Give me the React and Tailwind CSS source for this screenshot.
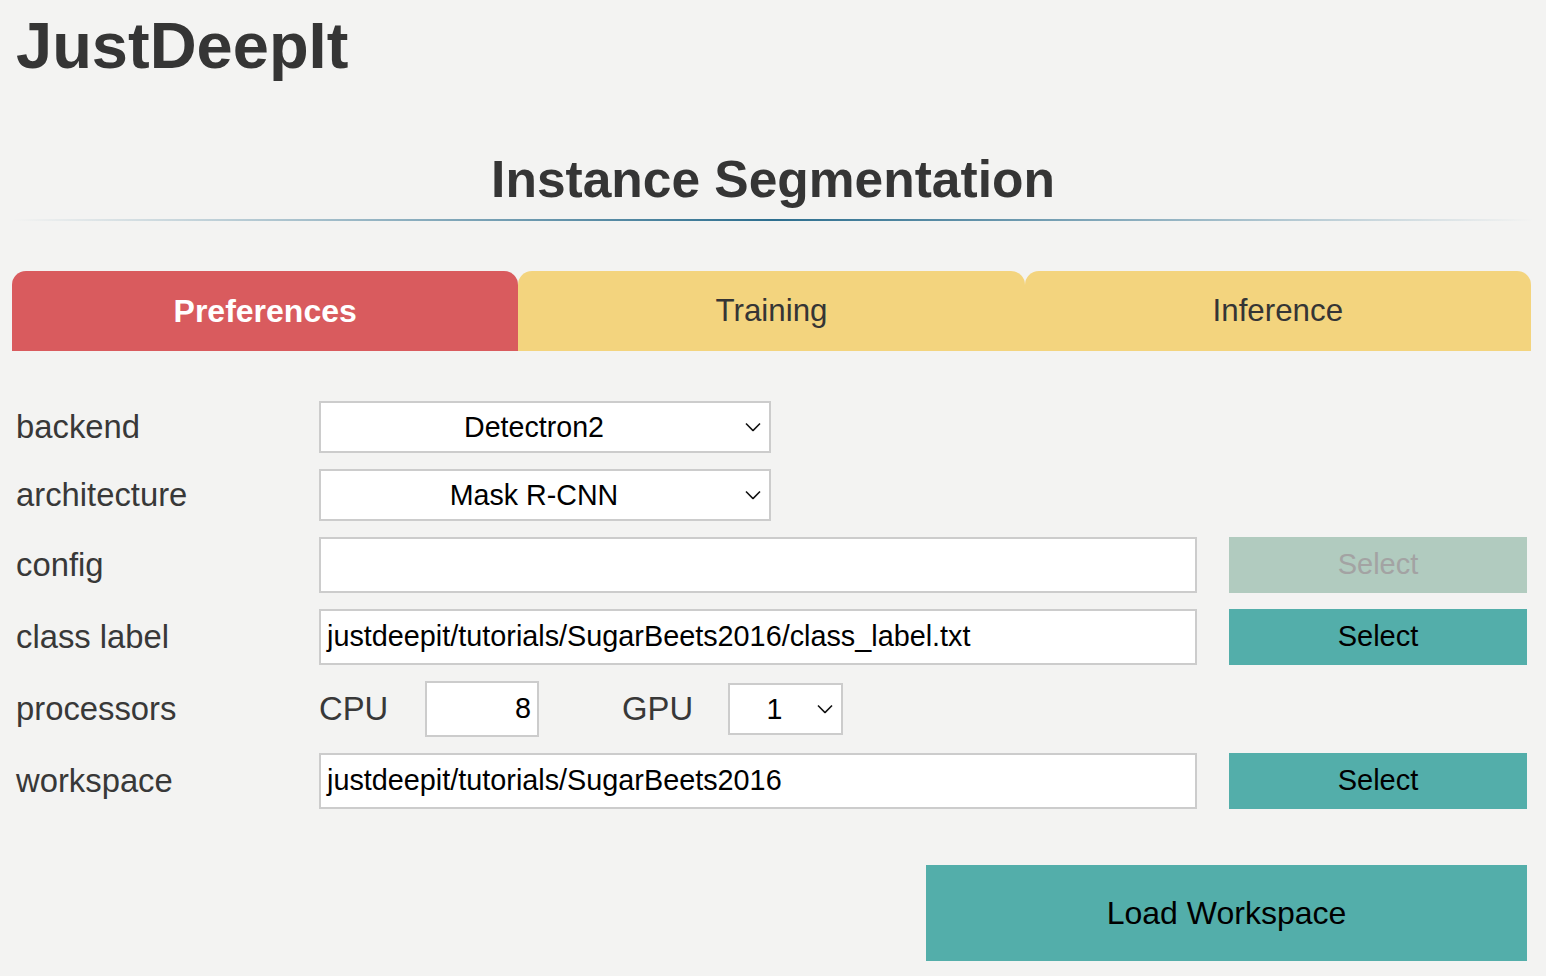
import React from "react";

const font = { fontFamily: '"Liberation Sans", Arial, sans-serif' };

const Chevron = () => (
  <svg width="16" height="9" viewBox="0 0 16 9" className="absolute right-[8px] top-1/2 -translate-y-1/2">
    <path d="M1 1 L8 8 L15 1" fill="none" stroke="#111" strokeWidth="1.6" />
  </svg>
);

const SelectBox = ({ value, className = "" }) => (
  <div
    className={`relative h-[52px] bg-white border-2 border-[#cccccc] flex items-center justify-center pr-[22px] text-[28.6px] text-black ${className}`}
  >
    {value}
    <Chevron />
  </div>
);

const TextBox = ({ value = "" }) => (
  <div className="h-[56px] bg-white border-2 border-[#cccccc] flex items-center pl-[6px] text-[28.8px] text-black">
    {value}
  </div>
);

const SelectButton = ({ disabled }) => (
  <button
    className={`h-[56px] w-full text-[29px] ${
      disabled ? "bg-[#b1cbbf] text-[#a3a3a3]" : "bg-[#53aeaa] text-black"
    }`}
  >
    Select
  </button>
);

const Label = ({ children }) => (
  <div className="text-[32.8px] text-[#383838] leading-none">{children}</div>
);

export default function App() {
  const tabs = [
    { name: "Preferences", active: true },
    { name: "Training" },
    { name: "Inference" },
  ];

  return (
    <div className="min-h-screen bg-[#f3f3f2] pb-[15px]" style={font}>
      <h1 className="pt-[13px] pl-[16px] text-[65px] leading-none font-bold text-[#353535]">
        JustDeepIt
      </h1>

      <h2 className="mt-[76px] text-center text-[51.5px] leading-[51px] font-bold text-[#353535]">
        Instance Segmentation
      </h2>
      <div className="mt-[14px] mx-[12px] h-[2px] bg-linear-to-r from-transparent via-[#2c6e8f] to-transparent" />

      <div className="mt-[50px] ml-[12px] mr-[15px] flex h-[80px]">
        {tabs.map((t) => (
          <div
            key={t.name}
            className={`flex-1 rounded-t-[14px] flex items-center justify-center ${
              t.active
                ? "bg-[#d95b5e] text-white font-bold text-[32px]"
                : "bg-[#f3d47e] text-[#353535] text-[31.3px]"
            }`}
          >
            {t.name}
          </div>
        ))}
      </div>

      <div className="mt-[50px] pl-[16px] pr-[19px] grid grid-cols-[271px_878px_298px] gap-x-[32px] gap-y-[16px] items-center">
        <Label>backend</Label>
        <div className="col-span-2">
          <SelectBox value="Detectron2" className="w-[452px]" />
        </div>

        <Label>architecture</Label>
        <div className="col-span-2">
          <SelectBox value="Mask R-CNN" className="w-[452px]" />
        </div>

        <Label>config</Label>
        <TextBox />
        <SelectButton disabled />

        <Label>class label</Label>
        <TextBox value="justdeepit/tutorials/SugarBeets2016/class_label.txt" />
        <SelectButton />

        <Label>processors</Label>
        <div className="col-span-2 flex items-center">
          <span className="text-[32.8px] text-[#383838] w-[106px]">CPU</span>
          <div className="h-[56px] w-[114px] bg-white border-2 border-[#cccccc] flex items-center justify-end pr-[6px] text-[28.8px] text-black">
            8
          </div>
          <span className="ml-[83px] text-[32.8px] text-[#383838] w-[106px]">GPU</span>
          <SelectBox value="1" className="w-[115px]" />
        </div>

        <Label>workspace</Label>
        <TextBox value="justdeepit/tutorials/SugarBeets2016" />
        <SelectButton />
      </div>

      <div className="mt-[56px] pr-[19px] flex justify-end">
        <button className="w-[601px] h-[96px] bg-[#53aeaa] text-[32px] text-black">
          Load Workspace
        </button>
      </div>
    </div>
  );
}
